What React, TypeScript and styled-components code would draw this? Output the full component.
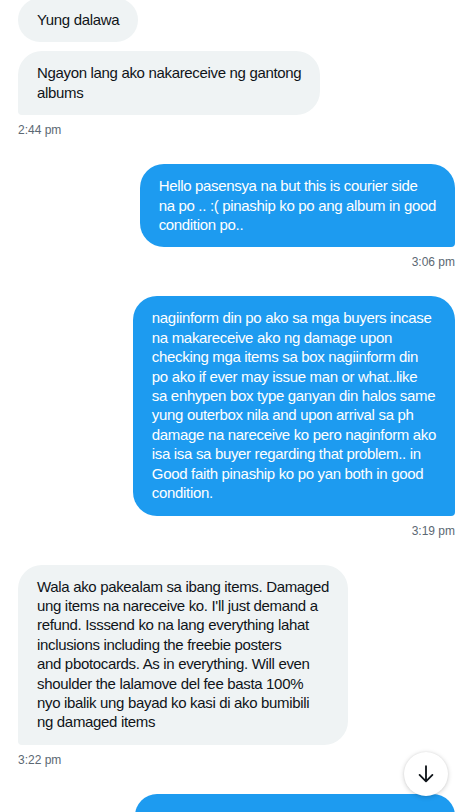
import React from "react";
import styled, { createGlobalStyle } from "styled-components";

type Side = "in" | "out";

interface Message {
  lines: string[];
  width?: number;
}

interface Group {
  side: Side;
  time?: string;
  messages: Message[];
}

const groups: Group[] = [
  {
    side: "in",
    time: "2:44 pm",
    messages: [
      { lines: ["Yung dalawa"] },
      { lines: ["Ngayon lang ako nakareceive ng gantong", "albums"] },
    ],
  },
  {
    side: "out",
    time: "3:06 pm",
    messages: [
      {
        lines: [
          "Hello pasensya na but this is courier side",
          "na po .. :( pinaship ko po ang album in good",
          "condition po..",
        ],
      },
    ],
  },
  {
    side: "out",
    time: "3:19 pm",
    messages: [
      {
        lines: [
          "nagiinform din po ako sa mga buyers incase",
          "na makareceive ako ng damage upon",
          "checking mga items sa box nagiinform din",
          "po ako if ever may issue man or what..like",
          "sa enhypen box type ganyan din halos same",
          "yung outerbox nila and upon arrival sa ph",
          "damage na nareceive ko pero naginform ako",
          "isa isa sa buyer regarding that problem.. in",
          "Good faith pinaship ko po yan both in good",
          "condition.",
        ],
      },
    ],
  },
  {
    side: "in",
    time: "3:22 pm",
    messages: [
      {
        lines: [
          "Wala ako pakealam sa ibang items. Damaged",
          "ung items na nareceive ko. I'll just demand a",
          "refund. Isssend ko na lang everything lahat",
          "inclusions including the freebie posters",
          "and pbotocards. As in everything. Will even",
          "shoulder the lalamove del fee basta 100%",
          "nyo ibalik ung bayad ko kasi di ako bumibili",
          "ng damaged items",
        ],
      },
    ],
  },
  {
    // next message, only its top edge is on screen
    side: "out",
    messages: [{ lines: [], width: 320 }],
  },
];

const GlobalStyle = createGlobalStyle`
  html, body {
    margin: 0;
    padding: 0;
    background: #ffffff;
    height: 812px;
    overflow: hidden;
  }
  body {
    font-family: "Liberation Sans", Arial, sans-serif;
    -webkit-font-smoothing: antialiased;
  }
`;

const Screen = styled.div`
  position: relative;
  width: 474px;
  height: 812px;
  overflow: hidden;
  background: #ffffff;
`;

const Thread = styled.div`
  display: flex;
  flex-direction: column;
  margin-top: -2px;
  padding: 0 19px 0 18px;
`;

const GroupBox = styled.div<{ $side: Side }>`
  display: flex;
  flex-direction: column;
  align-items: ${(p) => (p.$side === "out" ? "flex-end" : "flex-start")};
  margin-bottom: 26px;
`;

const Bubbles = styled.div<{ $side: Side }>`
  display: flex;
  flex-direction: column;
  align-items: ${(p) => (p.$side === "out" ? "flex-end" : "flex-start")};
  gap: 9px;
`;

const Bubble = styled.div<{ $side: Side; $last: boolean; $width?: number }>`
  box-sizing: border-box;
  min-width: ${(p) => (p.$width ? `${p.$width}px` : "0")};
  min-height: 44px;
  padding: 12px 19px 13px;
  border-radius: 24px;
  ${(p) =>
    p.$last &&
    (p.$side === "out"
      ? "border-bottom-right-radius: 4px;"
      : "border-bottom-left-radius: 4px;")}
  background: ${(p) => (p.$side === "out" ? "#1d9bf0" : "#eff3f4")};
  color: ${(p) => (p.$side === "out" ? "#ffffff" : "#0f1419")};
  font-size: 15px;
  letter-spacing: -0.33px;
  line-height: 19.4px;
  white-space: nowrap;
`;

const Time = styled.div`
  margin-top: 7px;
  font-size: 12px;
  line-height: 16px;
  color: #5b6873;
`;

const ScrollButton = styled.button`
  position: absolute;
  left: 404px;
  top: 752px;
  width: 44px;
  height: 44px;
  border: none;
  border-radius: 50%;
  background: #ffffff;
  box-shadow: 0 1px 5px rgba(0, 0, 0, 0.18), 0 0 2px rgba(0, 0, 0, 0.08);
  display: flex;
  align-items: center;
  justify-content: center;
  padding: 0;
  cursor: pointer;
`;

function ArrowDown() {
  return (
    <svg width="22" height="22" viewBox="0 0 24 24" fill="none">
      <path
        d="M12 3.5v16M5 13l7 7 7-7"
        stroke="#0f1419"
        strokeWidth="2"
        strokeLinecap="round"
        strokeLinejoin="round"
      />
    </svg>
  );
}

export default function App() {
  return (
    <Screen>
      <GlobalStyle />
      <Thread>
        {groups.map((g, gi) => (
          <GroupBox key={gi} $side={g.side}>
            <Bubbles $side={g.side}>
              {g.messages.map((m, mi) => (
                <Bubble
                  key={mi}
                  $side={g.side}
                  $width={m.width}
                  $last={mi === g.messages.length - 1 && !!g.time}
                >
                  {m.lines.map((line, li) => (
                    <React.Fragment key={li}>
                      {line}
                      {li < m.lines.length - 1 && <br />}
                    </React.Fragment>
                  ))}
                </Bubble>
              ))}
            </Bubbles>
            {g.time && <Time>{g.time}</Time>}
          </GroupBox>
        ))}
      </Thread>
      <ScrollButton aria-label="Scroll to bottom">
        <ArrowDown />
      </ScrollButton>
    </Screen>
  );
}
